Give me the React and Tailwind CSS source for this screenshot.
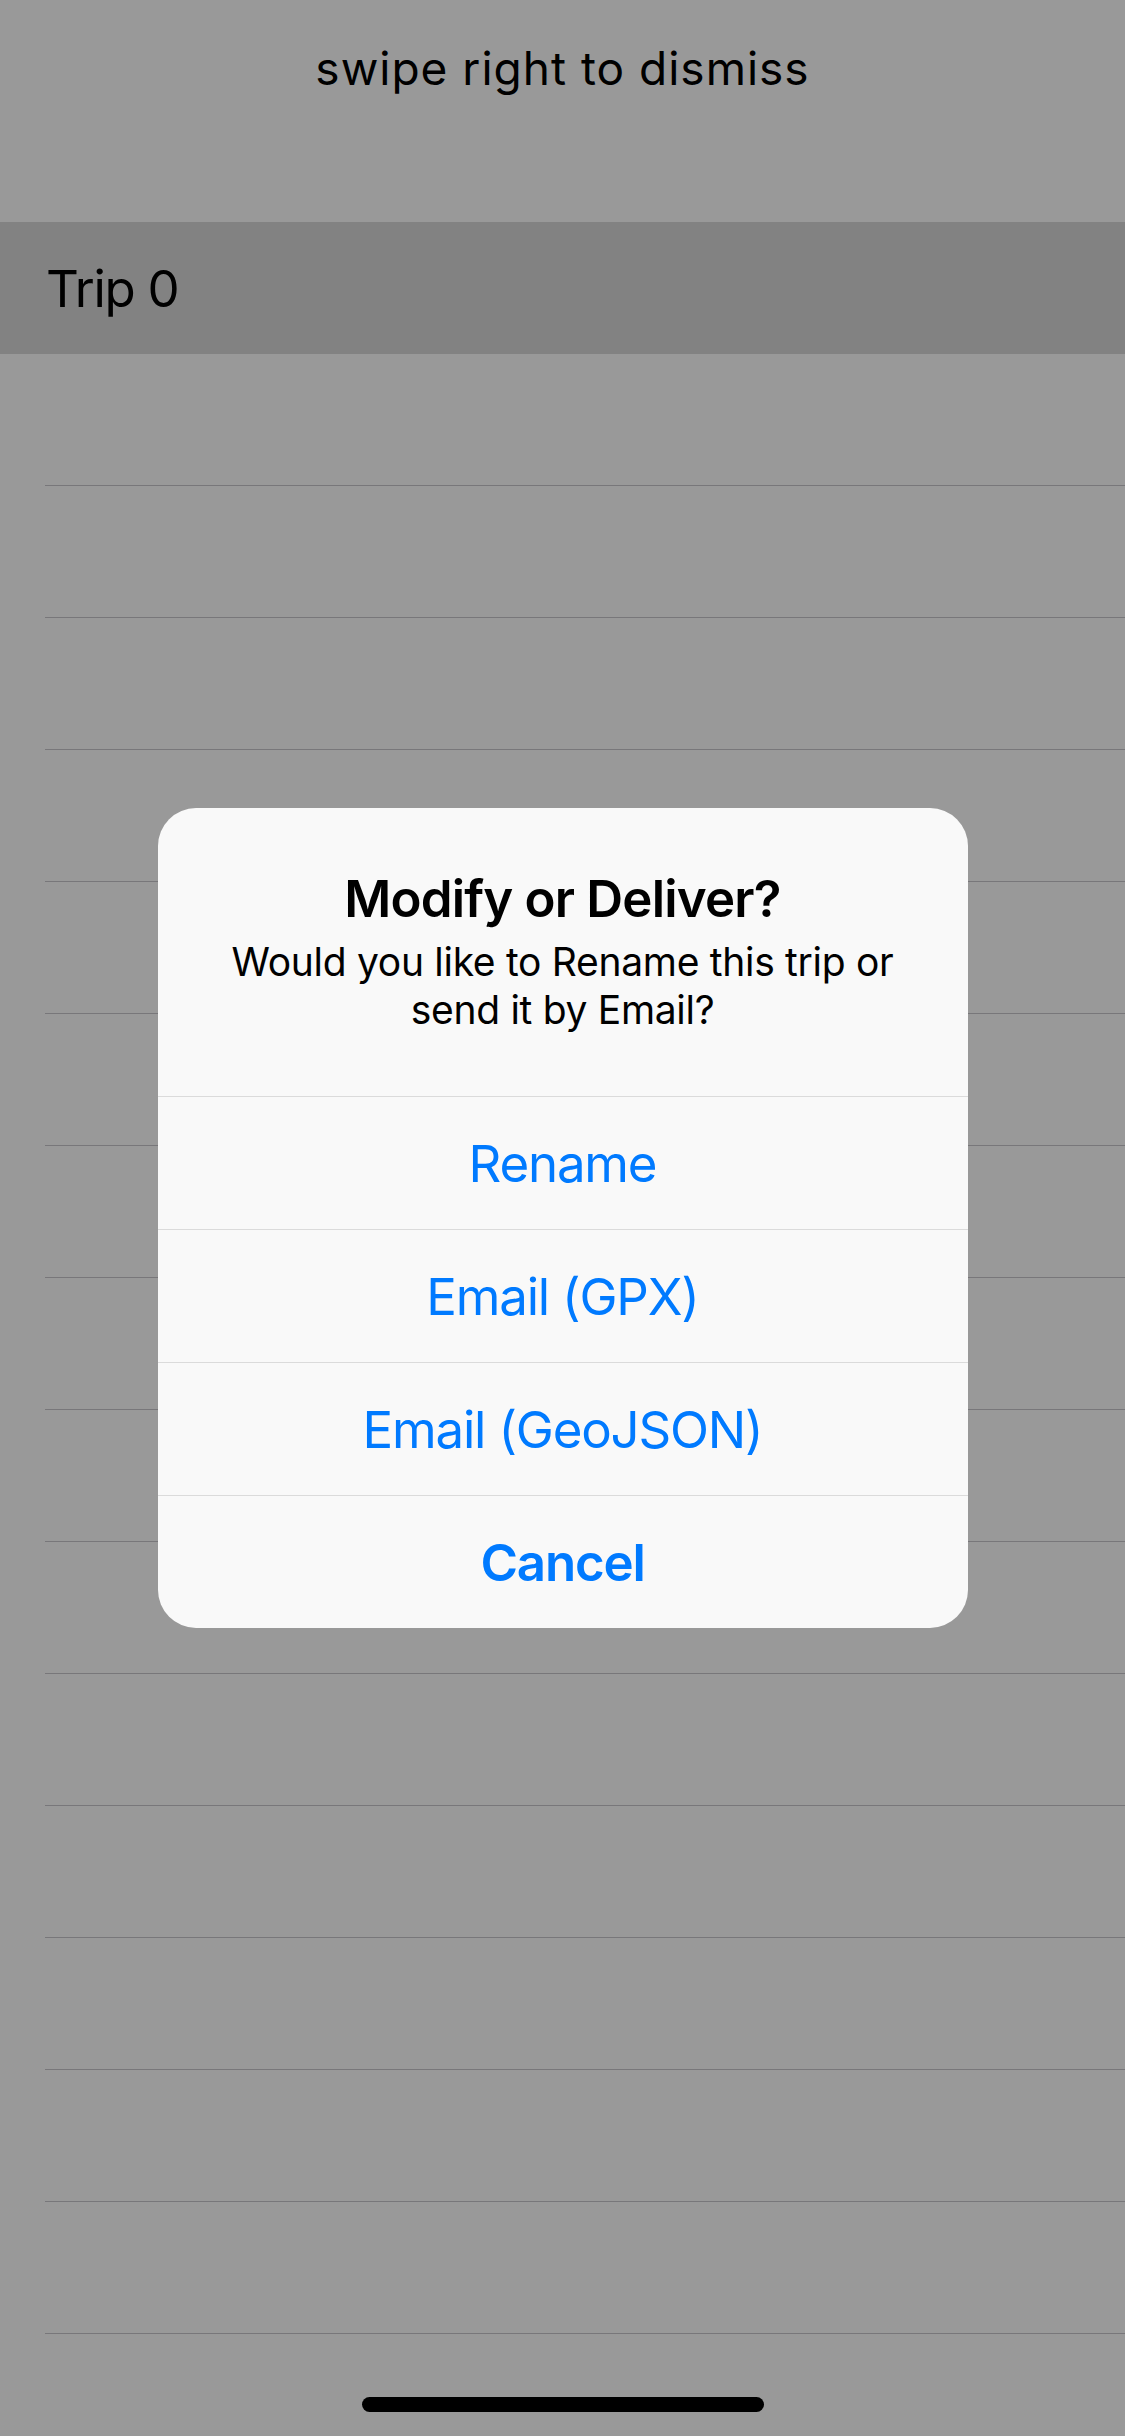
import { clsx } from 'clsx'

const ACTIONS = [
  { label: 'Rename' },
  { label: 'Email (GPX)' },
  { label: 'Email (GeoJSON)' },
  { label: 'Cancel', bold: true },
]

const EMPTY_ROWS = Array.from({ length: 16 }, (_, i) => i)

function TripRow({ label, selected }) {
  return (
    <div className={clsx('relative h-[132px] shrink-0', selected ? 'bg-[#d9d9d9]' : 'bg-white')}>
      {label && (
        <div className="flex h-full items-center pl-[46px] text-[51px] leading-[61px] tracking-[-1.3px] text-black">
          {label}
        </div>
      )}
      {!selected && <div className="absolute bottom-0 left-[45px] right-0 h-px bg-[#c8c7cc]" />}
    </div>
  )
}

function AlertDialog() {
  return (
    <div className="w-[810px] overflow-hidden rounded-[38px] bg-[#f9f9f9]">
      {/* Header */}
      <div className="flex flex-col items-center px-12 pt-[60px] pb-[62px] text-center text-black">
        <p className="text-[51px] leading-[61px] font-semibold tracking-[-0.8px]">Modify or Deliver?</p>
        <p className="mt-[9px] text-[39px] leading-[48px] tracking-[-0.3px]">
          Would you like to Rename this trip or
          <br />
          send it by Email?
        </p>
      </div>

      {/* Actions */}
      {ACTIONS.map(({ label, bold }) => (
        <button
          key={label}
          className={clsx(
            'flex h-[133px] w-full items-center justify-center border-t border-[#dbdbdb] text-[51px] leading-[61px] tracking-[-1.2px] text-[#007aff]',
            bold ? 'font-semibold' : 'font-normal'
          )}
        >
          {label}
        </button>
      ))}
    </div>
  )
}

export default function App() {
  return (
    <div
      className="relative h-[2436px] w-[1125px] overflow-hidden bg-white"
      style={{ fontFamily: 'Inter, "Noto Sans", sans-serif' }}
    >
      {/* Header */}
      <div className="h-[222px] pt-[40px] text-center text-[46px] leading-[56px] tracking-[1px] text-black">
        swipe right to dismiss
      </div>

      {/* Trip list */}
      <div className="flex flex-col">
        <TripRow label="Trip 0" selected />
        {EMPTY_ROWS.map(i => (
          <TripRow key={i} />
        ))}
      </div>

      {/* Dimmed overlay + alert */}
      <div className="absolute inset-0 flex items-center justify-center bg-[rgba(0,0,0,0.4)]">
        <AlertDialog />
      </div>

      {/* Home indicator */}
      <div className="absolute bottom-[24px] left-1/2 h-[15px] w-[402px] -translate-x-1/2 rounded-full bg-black" />
    </div>
  )
}
